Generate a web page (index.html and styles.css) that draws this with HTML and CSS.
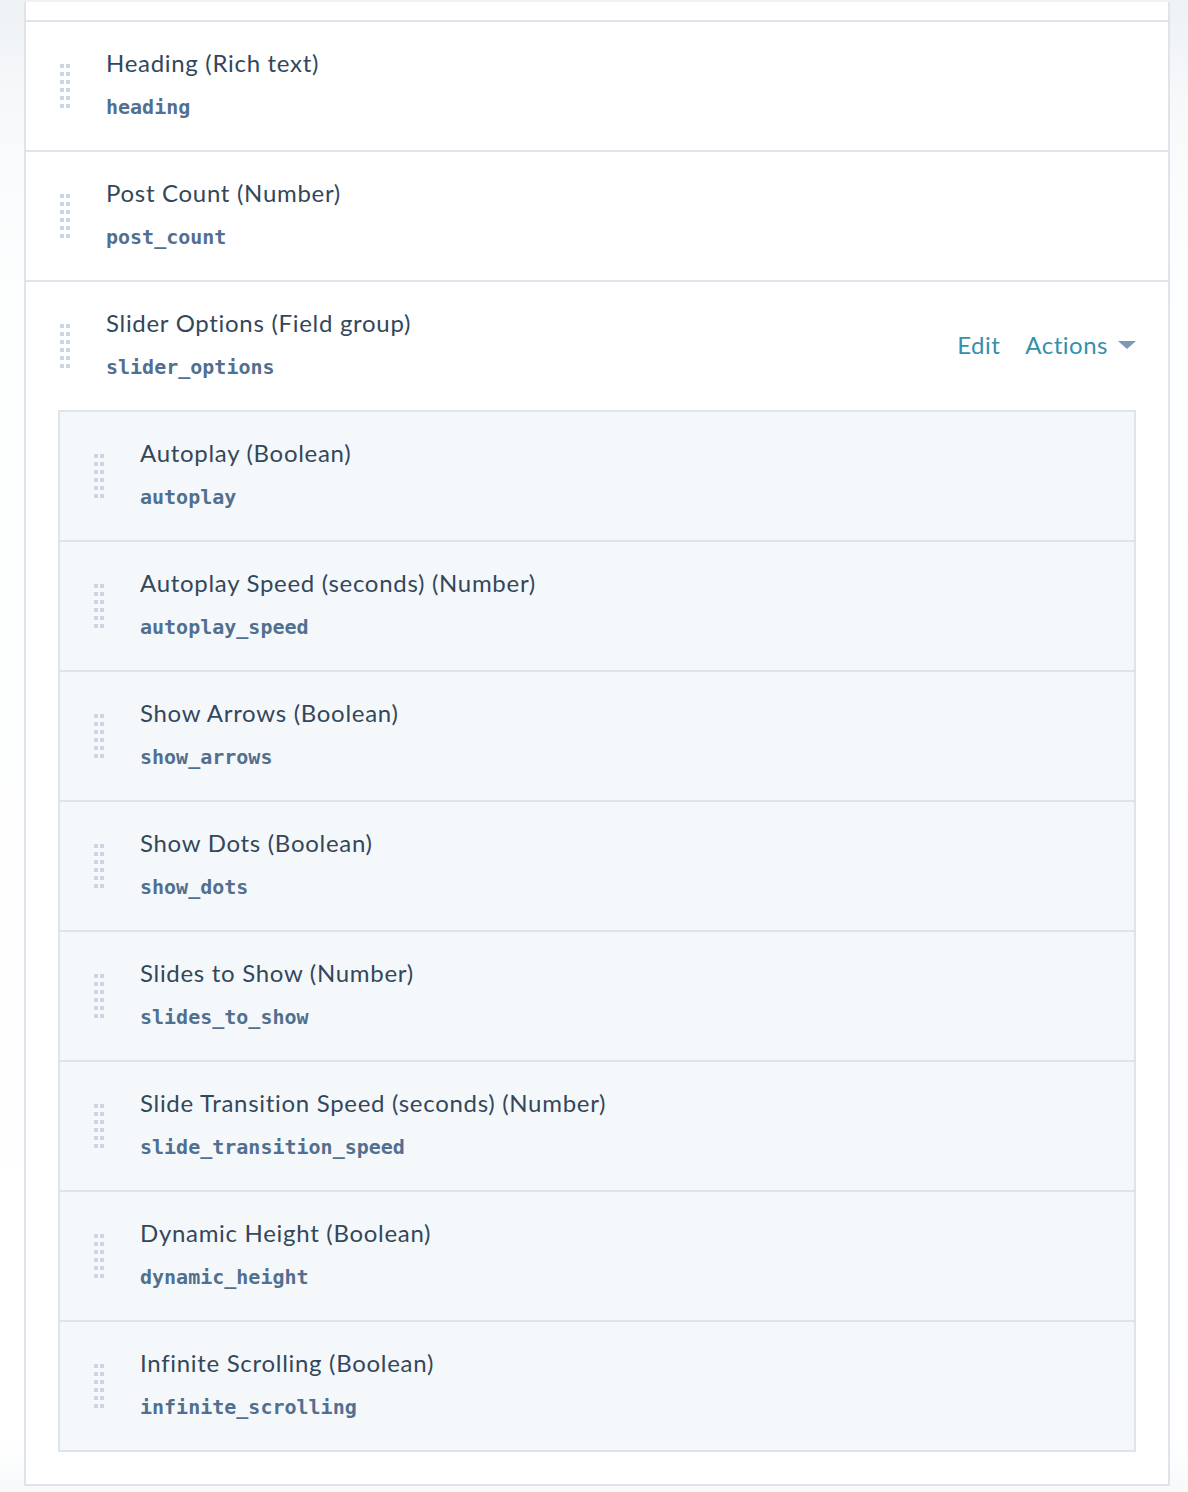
FILE: index.html
```html
<!DOCTYPE html>
<html>
<head>
<meta charset="utf-8">
<link rel="stylesheet" href="styles.css">
</head>
<body>
<div class="panel">
  <div class="row">
    <span class="handle"></span>
    <div class="info">
      <div class="label">Heading (Rich text)</div>
      <div class="name">heading</div>
    </div>
  </div>
  <div class="row">
    <span class="handle"></span>
    <div class="info">
      <div class="label">Post Count (Number)</div>
      <div class="name">post_count</div>
    </div>
  </div>
  <div class="row group-row">
    <div class="group-head">
      <span class="handle"></span>
      <div class="info">
        <div class="label">Slider Options (Field group)</div>
        <div class="name">slider_options</div>
      </div>
      <div class="actions">
        <a class="link">Edit</a>
        <a class="link">Actions <span class="caret"></span></a>
      </div>
    </div>
    <div class="group">
      <div class="row inner">
        <span class="handle"></span>
        <div class="info"><div class="label">Autoplay (Boolean)</div><div class="name">autoplay</div></div>
      </div>
      <div class="row inner">
        <span class="handle"></span>
        <div class="info"><div class="label">Autoplay Speed (seconds) (Number)</div><div class="name">autoplay_speed</div></div>
      </div>
      <div class="row inner">
        <span class="handle"></span>
        <div class="info"><div class="label">Show Arrows (Boolean)</div><div class="name">show_arrows</div></div>
      </div>
      <div class="row inner">
        <span class="handle"></span>
        <div class="info"><div class="label">Show Dots (Boolean)</div><div class="name">show_dots</div></div>
      </div>
      <div class="row inner">
        <span class="handle"></span>
        <div class="info"><div class="label">Slides to Show (Number)</div><div class="name">slides_to_show</div></div>
      </div>
      <div class="row inner">
        <span class="handle"></span>
        <div class="info"><div class="label">Slide Transition Speed (seconds) (Number)</div><div class="name">slide_transition_speed</div></div>
      </div>
      <div class="row inner">
        <span class="handle"></span>
        <div class="info"><div class="label">Dynamic Height (Boolean)</div><div class="name">dynamic_height</div></div>
      </div>
      <div class="row inner">
        <span class="handle"></span>
        <div class="info"><div class="label">Infinite Scrolling (Boolean)</div><div class="name">infinite_scrolling</div></div>
      </div>
    </div>
  </div>
</div>
</body>
</html>
```

FILE: styles.css
```css
html, body {
  margin: 0;
  padding: 0;
}
body {
  background: linear-gradient(to bottom, #eef2f5 0px, #f8f9fb 120px, #fdfefe 300px, #ffffff 1440px, #f7f9fa 1492px);
  font-family: Lato, "Open Sans", sans-serif;
  color: #33475b;
  min-height: 1492px;
  padding-top: 2px;
  box-sizing: border-box;
}
.panel {
  margin: 0 0 0 24px;
  background: #fff;
  border: 2px solid #dfe3eb;
  border-top: none;
  padding-top: 18px;
  width: 1146px;
  box-sizing: border-box;
}
.row {
  display: flex;
  align-items: center;
  height: 130px;
  box-sizing: border-box;
  border-top: 2px solid #dfe3eb;
  padding-left: 34px;
}
.handle {
  width: 10px;
  height: 44px;
  flex: none;
  background-image:
    linear-gradient(to right, #cbd6e2 4px, transparent 4px, transparent 6px, #cbd6e2 6px);
  -webkit-mask: repeating-linear-gradient(to bottom, #000 0 4px, transparent 4px 8px);
  mask: repeating-linear-gradient(to bottom, #000 0 4px, transparent 4px 8px);
}
.info {
  margin-left: 36px;
  margin-top: -5px;
  display: flex;
  flex-direction: column;
}
.label {
  font-size: 24px;
  line-height: 30px;
  letter-spacing: 0.7px;
  color: #33475b;
}
.name {
  font-family: "DejaVu Sans Mono", monospace;
  font-weight: bold;
  font-size: 20px;
  line-height: 24px;
  color: #516f90;
  margin-top: 17px;
}
.group-row {
  display: block;
  height: auto;
  padding: 0 32px 32px 32px;
}
.group-head {
  display: flex;
  align-items: center;
  height: 128px;
  padding-left: 2px;
}
.actions {
  margin-left: auto;
  margin-top: -4px;
  display: flex;
  align-items: center;
  gap: 25px;
}
.link {
  color: #3590ab;
  font-size: 24px;
  letter-spacing: 0.5px;
  display: flex;
  align-items: center;
}
.caret {
  display: inline-block;
  width: 0;
  height: 0;
  border-left: 9px solid transparent;
  border-right: 9px solid transparent;
  border-top: 8px solid #7c98b6;
  margin-left: 10px;
  margin-top: 2px;
}
.group {
  background: #f5f8fa;
  border: 2px solid #dfe3eb;
  border-top: none;
}
.group .row.inner {
  border-top: 2px solid #dfe3eb;
  padding-left: 34px;
}
```
